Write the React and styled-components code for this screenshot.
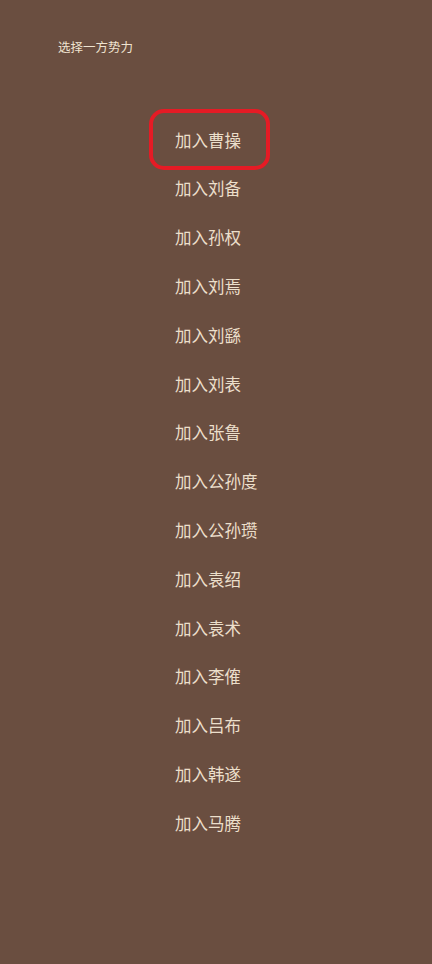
import React from "react";
import styled, { createGlobalStyle } from "styled-components";

const Global = createGlobalStyle`
  html, body { margin: 0; padding: 0; background: #6a4e40; }
  body { font-family: "Noto Sans CJK SC", "Noto Sans", sans-serif; }
`;

const Page = styled.div`
  width: 432px;
  min-height: 964px;
  background: #6a4e40;
  box-sizing: border-box;
  padding-top: 37px;
`;

const Title = styled.div`
  margin-left: 58px;
  font-size: 12.5px;
  line-height: 20px;
  color: #efe3d0;
`;

const List = styled.div`
  display: flex;
  flex-direction: column;
  align-items: flex-start;
  padding-left: 175px;
  margin-top: 58.6px;
`;

const Item = styled.div`
  position: relative;
  height: 48.8px;
  line-height: 48.8px;
  font-size: 16.5px;
  color: #ecdfcb;
  cursor: pointer;
  white-space: nowrap;
  ${(p) =>
    p.$selected &&
    `
    &::before {
      content: "";
      position: absolute;
      left: -26px;
      right: -29px;
      top: -6.6px;
      bottom: -5.6px;
      border: 4px solid #e51b25;
      border-radius: 15px;
      box-sizing: border-box;
    }
  `}
`;

const factions = [
  "曹操", "刘备", "孙权", "刘焉", "刘繇", "刘表", "张鲁", "公孙度",
  "公孙瓒", "袁绍", "袁术", "李傕", "吕布", "韩遂", "马腾",
];

export default function App() {
  return (
    <>
      <Global />
      <Page>
        <Title>选择一方势力</Title>
        <List>
          {factions.map((f, i) => (
            <Item key={f} $selected={i === 0}>加入{f}</Item>
          ))}
        </List>
      </Page>
    </>
  );
}
